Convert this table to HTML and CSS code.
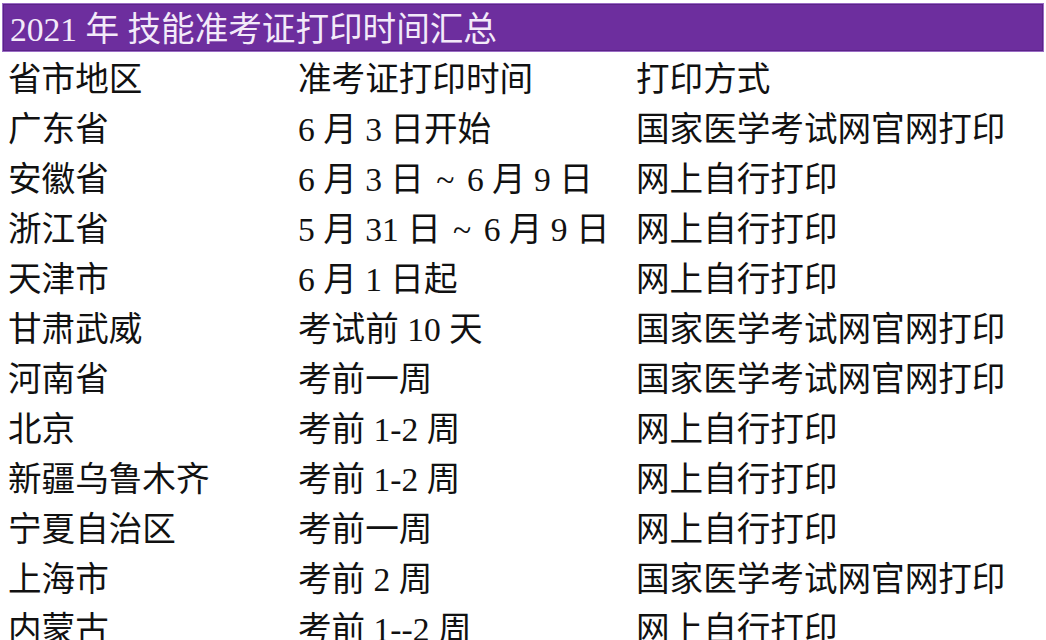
FILE: index.html
```html
<!DOCTYPE html>
<html lang="zh-CN">
<head>
<meta charset="utf-8">
<title>2021 年 技能准考证打印时间汇总</title>
<link rel="stylesheet" href="styles.css">
</head>
<body>
<div class="page">
  <div class="title-bar"><span class="title-text">2021 年 技能准考证打印时间汇总</span></div>
  <div class="table">
    <div class="row head"><span>省市地区</span><span>准考证打印时间</span><span>打印方式</span></div>
    <div class="row"><span>广东省</span><span>6 月 3 日开始</span><span>国家医学考试网官网打印</span></div>
    <div class="row"><span>安徽省</span><span>6 月 3 日 <span class="tilde">~</span> 6 月 9 日</span><span>网上自行打印</span></div>
    <div class="row"><span>浙江省</span><span>5 月 31 日 <span class="tilde">~</span> 6 月 9 日</span><span>网上自行打印</span></div>
    <div class="row"><span>天津市</span><span>6 月 1 日起</span><span>网上自行打印</span></div>
    <div class="row"><span>甘肃武威</span><span>考试前 10 天</span><span>国家医学考试网官网打印</span></div>
    <div class="row"><span>河南省</span><span>考前一周</span><span>国家医学考试网官网打印</span></div>
    <div class="row"><span>北京</span><span>考前 1-2 周</span><span>网上自行打印</span></div>
    <div class="row"><span>新疆乌鲁木齐</span><span>考前 1-2 周</span><span>网上自行打印</span></div>
    <div class="row"><span>宁夏自治区</span><span>考前一周</span><span>网上自行打印</span></div>
    <div class="row"><span>上海市</span><span>考前 2 周</span><span>国家医学考试网官网打印</span></div>
    <div class="row"><span>内蒙古</span><span>考前 1--2 周</span><span>网上自行打印</span></div>
  </div>
</div>
</body>
</html>
```
FILE: styles.css
```css
html, body {
  margin: 0;
  padding: 0;
  background: #ffffff;
  overflow: hidden;
}
.page {
  width: 1046px;
  height: 640px;
  padding-top: 3px;
  box-sizing: border-box;
  font-family: "Liberation Serif", "Noto Sans CJK SC", serif;
  color: #111111;
}
.title-bar {
  margin: 0 2px;
  height: 47px;
  box-sizing: content-box;
  background: #6d2e9e;
  border: 1px solid #9a6cc4;
  box-shadow: inset 0 0 0 1px #5b2388;
  color: #f3eaf9;
  font-size: 33.6px;
  padding-left: 7px;
  white-space: nowrap;
  display: flex;
  align-items: center;
}
.title-text {
  line-height: 47px;
  padding-top: 3px;
}
.table {
  padding-left: 8px;
  padding-top: 3px;
  font-size: 33.6px;
}
.row {
  display: grid;
  grid-template-columns: 290px 338px 1fr;
  height: 50px;
  line-height: 50px;
  white-space: nowrap;
}
.tilde {
  padding: 0 4px;
}
```
